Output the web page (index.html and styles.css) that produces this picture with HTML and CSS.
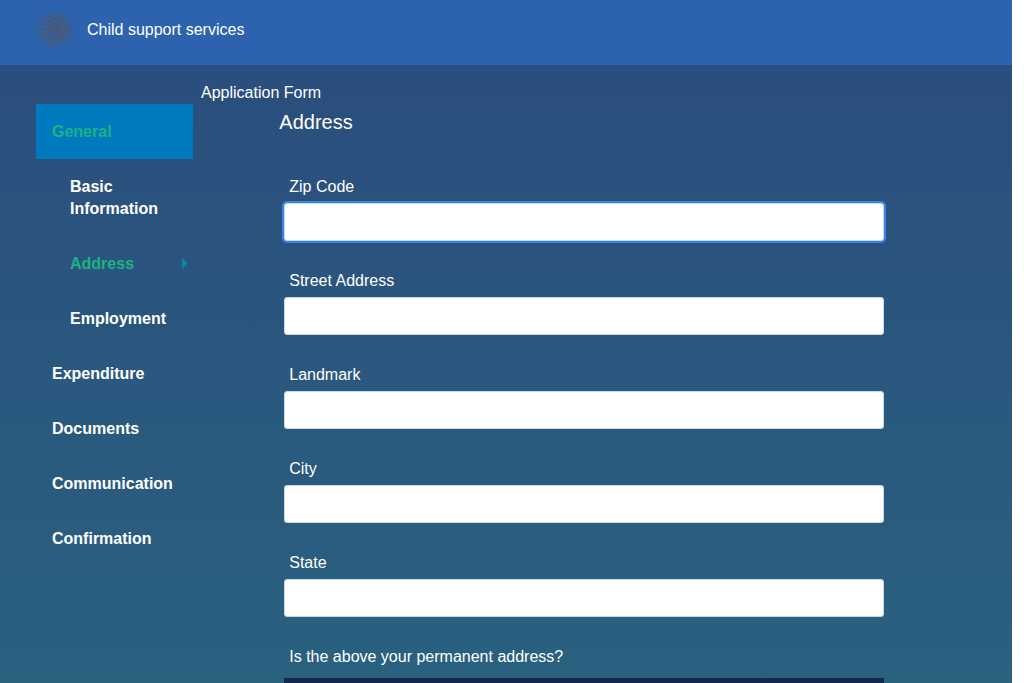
FILE: index.html
```html
<!DOCTYPE html>
<html lang="en">
<head>
<meta charset="utf-8">
<title>Child support services</title>
<link rel="stylesheet" href="styles.css">
</head>
<body>
<div class="page">
  <header class="header">
    <svg class="logo" viewBox="0 0 150 144" aria-hidden="true">
      <g fill="none" stroke="#5a5452">
        <circle cx="78" cy="74" r="6" pathLength="30" stroke-width="8" stroke-dasharray="7 3"/>
        <circle cx="77" cy="74" r="18" pathLength="80" stroke-width="8" stroke-dasharray="6.4 3.6" transform="rotate(15 77 74)"/>
        <circle cx="76" cy="73" r="30" pathLength="130" stroke-width="7.5" stroke-dasharray="6 4" transform="rotate(32 76 73)"/>
        <circle cx="75" cy="73" r="41" pathLength="190" stroke-width="6" stroke-dasharray="5 5" transform="rotate(8 75 73)"/>
        <circle cx="74" cy="73" r="51" pathLength="250" stroke-width="4.5" stroke-dasharray="4 6" transform="rotate(3 74 73)"/>
      </g>
    </svg>
    <span class="brand">Child support services</span>
  </header>
  <main class="body">
    <nav class="menu">
      <a class="item active">General</a>
      <a class="item sub">Basic Information</a>
      <a class="item sub current">Address<svg class="arrow" viewBox="0 0 5.5 11"><path d="M0 0L5.5 5.5L0 11Z" fill="#0489a8"/></svg></a>
      <a class="item sub">Employment</a>
      <a class="item">Expenditure</a>
      <a class="item">Documents</a>
      <a class="item">Communication</a>
      <a class="item">Confirmation</a>
    </nav>
    <section class="content">
      <div class="form-name">Application Form</div>
      <h1 class="title">Address</h1>
      <form class="form">
        <label class="field">Zip Code<input class="input focused" type="text"></label>
        <label class="field">Street Address<input class="input" type="text"></label>
        <label class="field">Landmark<input class="input" type="text"></label>
        <label class="field">City<input class="input" type="text"></label>
        <label class="field">State<input class="input" type="text"></label>
        <div class="field">Is the above your permanent address?<div class="choice"></div></div>
      </form>
    </section>
  </main>
</div>
</body>
</html>
```
FILE: styles.css
```css
* { box-sizing: border-box; }
body {
  margin: 0;
  background: #fff;
  color: #fff;
  font: 16px/22px "Liberation Sans", Arial, sans-serif;
  overflow: hidden;
}
.page { width: 1012px; height: 683px; display: flex; flex-direction: column; overflow: hidden; }
.header {
  flex: none;
  height: 65px;
  display: flex;
  align-items: flex-start;
  padding: 5px 0 0 30px;
  background: #2d63ae;
}
.logo { width: 50px; height: 48px; flex: none; }
.brand { margin: 14px 0 0 7px; }
.body {
  flex: 1;
  min-height: 0;
  display: flex;
  overflow: hidden;
  background: linear-gradient(#2a4e7d, #2a617f);
}
.menu { flex: none; width: 157px; margin: 39px 0 0 36px; font-weight: bold; }
.item { display: block; padding: 16.5px 16px; }
.sub { padding-left: 34px; }
.active { background: #007abf; color: #1bb286; }
.current {
  display: flex;
  align-items: center;
  justify-content: space-between;
  padding-right: 5.5px;
  color: #1bb286;
}
.arrow { width: 5.5px; height: 11px; }
.content { padding: 17px 0 0 8px; }
.form-name { height: 22px; }
.title { margin: 6px 0 0 78.3px; font-size: 20px; line-height: 24px; font-weight: normal; }
.form { margin: 42px 0 0 83px; width: 600px; }
.field { display: block; height: 94px; padding-left: 5.25px; }
.input {
  display: block;
  width: 600px;
  height: 38px;
  margin: 5px 0 0 -5.25px;
  border: 1px solid #c6dbea;
  border-radius: 3px;
  background: #fff;
}
.focused { box-shadow: 0 0 0 2px #3584e4; }
.choice { width: 600px; height: 60px; margin: 10px 0 0 -5.25px; background: #142850; }
```
